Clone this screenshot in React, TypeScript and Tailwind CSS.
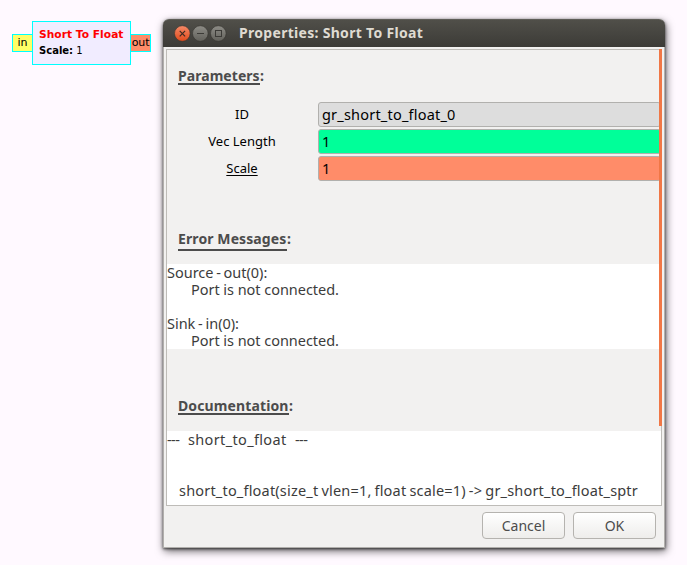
import { ReactNode } from "react";

function Port({ label, className }: { label: string; className: string }) {
  return (
    <div className={`mt-[13px] flex h-[18px] w-5 items-center justify-center border border-[#00ffff] pb-px text-[11px] leading-none tracking-[-0.1px] ${className}`}>
      {label}
    </div>
  );
}

function FlowBlock() {
  return (
    <div className="mt-[21px] ml-3 flex w-[139px] shrink-0 items-start font-['DejaVu_Sans',sans-serif] text-black">
      <Port label="in" className="border-r-0 bg-[#ffff66]" />
      <div className="flex h-11 w-[99px] shrink-0 flex-col border border-[#00ffff] bg-[#f1ecff] pt-[5px] pl-1.5 whitespace-nowrap">
        <div className="h-4 text-[10.67px] leading-4 font-bold tracking-[0.03px] text-[#ff0000]">Short To Float</div>
        <div className="h-4 text-[10px] leading-4">
          <b>Scale:</b> 1
        </div>
      </div>
      <Port label="out" className="border-l-0 bg-[#ff8c69]" />
    </div>
  );
}

function WindowButton({ kind }: { kind: "close" | "min" | "max" }) {
  return (
    <svg width="18" height="18" viewBox="0 0 18 18" fill="none">
      <defs>
        <linearGradient id={`g-${kind}`} x1="0" y1="0" x2="0" y2="1">
          <stop offset="0" stopColor={kind === "close" ? "#f58a68" : "#8d8c86"} />
          <stop offset="1" stopColor={kind === "close" ? "#df4a1b" : "#62615b"} />
        </linearGradient>
      </defs>
      <circle cx="9.3" cy="8.5" r="7.8" fill={`url(#g-${kind})`} stroke="#35342f" strokeWidth="0.6" />
      {kind === "close" && <path d="M6.7 5.9 L12.1 11.3 M12.1 5.9 L6.7 11.3" stroke="#3c2a22" strokeWidth="1.2" />}
      {kind === "min" && <path d="M6 8.5 H13" stroke="#3c3b37" />}
      {kind === "max" && <rect x="6.5" y="5.5" width="6" height="6" stroke="#3c3b37" />}
    </svg>
  );
}

function Heading({ text, lineClass }: { text: string; lineClass: string }) {
  return (
    <h2 className="flex pl-[11px] text-[14px] leading-[18px] font-bold text-[#4c4c4c]">
      <span className={`shrink-0 border-b-2 border-[#4c4c4c] whitespace-nowrap ${lineClass}`}>{text}</span>
      <span>:</span>
    </h2>
  );
}

function Param({ label, value, fieldClass }: { label: ReactNode; value: string; fieldClass: string }) {
  return (
    <div className="flex h-[25px] items-center">
      <div className="w-[151px] pr-px text-center text-[13px] text-black">{label}</div>
      <div className={`flex h-[25px] flex-1 items-center rounded-[3px] border border-[#b1b0ad] pl-[3px] text-[14.5px] tracking-[0.2px] text-black ${fieldClass}`}>
        {value}
      </div>
    </div>
  );
}

function DialogButton({ children }: { children: string }) {
  return (
    <button className="h-[27px] w-[83px] rounded-[4px] border border-[#b5b3af] bg-linear-to-b from-white to-[#eeedeb] text-[14px] leading-[25px] text-[#4c4c4c]">
      {children}
    </button>
  );
}

function PropertiesDialog() {
  return (
    <section className="mt-[19px] ml-3 flex h-[529px] w-[502px] shrink-0 flex-col rounded-t-[6px] bg-[#f2f1f0] font-['Noto_Sans','Open_Sans',sans-serif] shadow-[0_1px_3px_rgba(0,0,0,0.65),1px_3px_8px_rgba(0,0,0,0.6)]">
      <header className="flex h-7 shrink-0 items-center rounded-t-[6px] border-t border-[#5e5d57] bg-linear-to-b from-[#504f49] to-[#3c3b37] pl-[10px]">
        <WindowButton kind="close" />
        <WindowButton kind="min" />
        <WindowButton kind="max" />
        <h1 className="ml-3 pb-0.5 text-[14px] leading-5 font-bold tracking-[0.3px] text-[#dfdbd2]">Properties: Short To Float</h1>
      </header>
      <div className="flex flex-1 flex-col border border-t-0 border-[#b1afac] px-0.5 pt-0.5">
        <div className="relative h-[457px] w-[496px] border border-[#bebcb8]">
          <div className="flex h-[52px] flex-col pt-[17px]">
            <Heading text="Parameters" lineClass="w-[82px] h-[18px] tracking-[0.05px]" />
          </div>
          <div className="flex h-[162px] flex-col gap-0.5">
            <Param label="ID" value="gr_short_to_float_0" fieldClass="bg-[#dddddd]" />
            <Param label="Vec Length" value="1" fieldClass="bg-[#00ff99]" />
            <Param label={<span className="underline underline-offset-2">Scale</span>} value="1" fieldClass="bg-[#ff8c69]" />
            <div className="flex flex-1 flex-col pt-[47px]">
              <Heading text="Error Messages" lineClass="w-[109px] h-[21px] tracking-[0.1px]" />
            </div>
          </div>
          <div className="h-[85px] bg-white text-[14.5px] leading-[17px] whitespace-nowrap text-[#3c3c3c]">
            <div className="tracking-[-0.02px] [word-spacing:-1px]">Source - out(0):</div>
            <div className="pl-6 tracking-[-0.04px]">Port is not connected.</div>
            <div className="h-[17px]" />
            <div className="tracking-[-0.02px] [word-spacing:-1px]">Sink - in(0):</div>
            <div className="pl-6 tracking-[-0.04px]">Port is not connected.</div>
          </div>
          <div className="flex h-[82px] flex-col pt-[48px]">
            <Heading text="Documentation" lineClass="w-[111px] h-[18px] tracking-[0.12px]" />
          </div>
          <div className="h-[74px] bg-white text-[14.5px] leading-[17px] whitespace-nowrap text-[#3c3c3c]">
            <div className="flex h-[51px]">
              <span className="w-[21px] tracking-[-0.6px]">---</span>
              <span className="w-[107px] tracking-[0.35px]">short_to_float</span>
              <span className="tracking-[-0.6px]">---</span>
            </div>
            <div className="pl-3 tracking-[0.19px] [word-spacing:-0.9px]">
              short_to_float(size_t vlen=1, float scale=1) -&gt; gr_short_to_float_sptr
            </div>
          </div>
          <div className="absolute -top-px -right-px h-[377px] w-[3px] bg-[#f07746]" />
        </div>
        <footer className="flex justify-end gap-2 pt-1.5 pr-1.5">
          <DialogButton>Cancel</DialogButton>
          <DialogButton>OK</DialogButton>
        </footer>
      </div>
    </section>
  );
}

export default function App() {
  return (
    <main className="flex h-[565px] w-[687px] items-start overflow-hidden bg-[#fff9ff]">
      <FlowBlock />
      <PropertiesDialog />
    </main>
  );
}
